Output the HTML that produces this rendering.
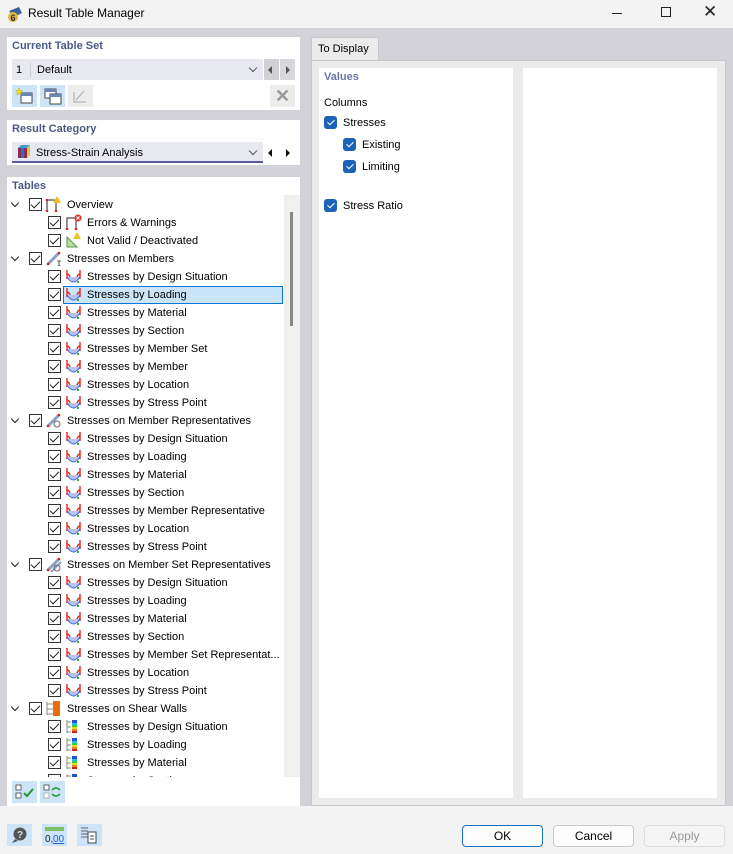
<!DOCTYPE html>
<html><head><meta charset="utf-8"><style>
*{box-sizing:border-box;margin:0;padding:0}
body{width:733px;height:854px;background:#f3f3f3;font-family:"Liberation Sans",sans-serif;font-size:11px;color:#000;position:relative;overflow:hidden}
.a{position:absolute}
.title{left:0;top:0;width:733px;height:28px;background:#f3f3f3}
.body{left:0;top:28px;width:733px;height:778px;background:#d3d2d8}
.panel{background:#fff}
.hdr{color:#4a5a85;font-weight:bold;font-size:11px}
.row{position:absolute;height:18px;line-height:20px;white-space:nowrap}
.cb{position:absolute;top:3px;width:13px;height:13px;border:1px solid #333;background:#fff}
.cb:after{content:"";position:absolute;left:3px;top:0px;width:4px;height:8px;border:solid #222;border-width:0 1.3px 1.3px 0;transform:rotate(45deg)}
.chev{position:absolute;top:5px;width:6px;height:6px;border:solid #222;border-width:0 1.5px 1.5px 0;transform:rotate(45deg)}
.ic{position:absolute;top:1px;width:17px;height:16px}
.bcb{position:absolute;width:13px;height:13px;border-radius:3px;background:#1b63b8}
.bcb:after{content:"";position:absolute;left:4.5px;top:2px;width:3px;height:6px;border:solid #fff;border-width:0 1px 1px 0;transform:rotate(45deg)}
.btn{position:absolute;height:22px;border:1px solid #c9c9c9;border-radius:4px;background:#fdfdfd;text-align:center;line-height:20px;font-size:12px}
.tb{position:absolute;background:#cde3f7;width:25px;height:22px}
</style></head><body>
<div class="a title">
<svg class="a" style="left:6px;top:5px" width="18" height="18"><path d="M3 6 L13 2 L16 8 L8 12Z" fill="#3d5f9a"/><circle cx="7" cy="12" r="5" fill="#e2b73c"/><text x="4.5" y="16" font-size="9" font-weight="bold" fill="#333" font-family="Liberation Sans">6</text></svg>
<div class="a" style="left:28px;top:6px;font-size:12px">Result Table Manager</div>
<div class="a" style="left:612px;top:13px;width:10px;height:1px;background:#222"></div>
<div class="a" style="left:661px;top:7px;width:10px;height:10px;border:1px solid #222"></div>
<div class="a" style="left:703px;top:2px;font-size:17px;color:#222">✕</div>
</div>
<div class="a body"></div>

<div class="a panel" style="left:7px;top:37px;width:293px;height:73px"></div>
<div class="a hdr" style="left:12px;top:40px">Current Table Set</div>
<div class="a" style="left:12px;top:59px;width:251px;height:21px;background:#e8e8f1"></div>
<div class="a" style="left:16px;top:64px;font-size:11px">1</div>
<div class="a" style="left:30px;top:62px;width:1px;height:15px;background:#ccc"></div>
<div class="a" style="left:37px;top:64px">Default</div>
<div class="a chev" style="left:250px;top:65px;border-color:#555;border-width:0 1px 1px 0"></div>
<div class="a" style="left:264px;top:59px;width:15px;height:21px;background:#d2d2d6"></div>
<div class="a" style="left:280px;top:59px;width:15px;height:21px;background:#d8d8dc"></div>
<div class="a" style="left:268px;top:66px;border:4px solid transparent;border-right:4px solid #555;border-left:none"></div>
<div class="a" style="left:286px;top:66px;border:4px solid transparent;border-left:4px solid #555;border-right:none"></div>
<div class="tb" style="left:12px;top:85px"><svg width="25" height="22"><rect x="9" y="8" width="11" height="10" fill="#fff" stroke="#444"/><rect x="9" y="8" width="11" height="3" fill="#6a86b6"/><path d="M7 3l1 2.5 2.5.2-2 1.7.7 2.6-2.2-1.4-2.2 1.4.7-2.6-2-1.7 2.5-.2z" fill="#f4e21a" stroke="#bba400" stroke-width=".5"/></svg></div>
<div class="tb" style="left:40px;top:85px"><svg width="25" height="22"><rect x="5" y="4" width="11" height="9" fill="#fff" stroke="#444"/><rect x="5" y="4" width="11" height="3" fill="#6a86b6"/><rect x="10" y="9" width="11" height="10" fill="#fff" stroke="#444"/><rect x="10" y="9" width="11" height="3" fill="#6a86b6"/></svg></div>
<div class="a" style="left:68px;top:85px;width:25px;height:22px;background:#ececec"><svg width="25" height="22"><path d="M6 7v10h12M8 15l8-9" stroke="#aaa" fill="none"/></svg></div>
<div class="a" style="left:270px;top:85px;width:25px;height:22px;background:#ececec;color:#999;font-size:18px;text-align:center;line-height:22px;font-weight:bold">✕</div>

<div class="a panel" style="left:7px;top:120px;width:293px;height:45px"></div>
<div class="a hdr" style="left:12px;top:123px">Result Category</div>
<div class="a" style="left:12px;top:142px;width:251px;height:21px;background:#e8e8f1;border-bottom:2px solid #5a5aa0"></div>
<svg class="a" style="left:16px;top:144px" width="16" height="16"><rect x="2" y="4" width="9" height="10" fill="#8a2d5a"/><path d="M2 4l3-3h9l-3 3z" fill="#3aa0d8"/><path d="M11 4l3-3v10l-3 3z" fill="#e8c23a"/><rect x="5" y="4" width="3" height="10" fill="#3a6ab0"/></svg>
<div class="a" style="left:36px;top:147px">Stress-Strain Analysis</div>
<div class="a chev" style="left:250px;top:148px;border-color:#555;border-width:0 1px 1px 0"></div>
<div class="a" style="left:264px;top:142px;width:15px;height:21px;background:#fff"></div>
<div class="a" style="left:268px;top:149px;border:4px solid transparent;border-right:4px solid #111;border-left:none"></div>
<div class="a" style="left:286px;top:149px;border:4px solid transparent;border-left:4px solid #111;border-right:none"></div>

<div class="a panel" style="left:7px;top:177px;width:293px;height:629px"></div>
<div class="a hdr" style="left:12px;top:180px">Tables</div>
<div class="a" style="left:284px;top:195px;width:16px;height:582px;background:#f0f0f0"></div>
<div class="a" style="left:290px;top:212px;width:3px;height:114px;background:#888"></div>
<div class="a" style="left:63px;top:286px;width:220px;height:18px;background:#cce4f7;border:1px solid #0078d7"></div>
<div class="a" style="left:7px;top:195px;width:277px;height:582px;overflow:hidden">
<div style="position:relative;left:-7px;top:-195px;width:284px;height:800px">
<svg width="0" height="0" style="position:absolute"><defs>
<g id="st"><path d="M2 2v9M15 2v9" stroke="#e0302a" stroke-width="1.5"/><path d="M2 6q2 0 3 3M15 6q-2 0-3 3" stroke="#e0302a" stroke-width="1.5" fill="none"/><path d="M2 9q6.5 10 13 0" stroke="#4060d0" fill="#b8c4f0" /><rect x="12" y="13" width="2" height="2" fill="#2bb52b"/></g>
<g id="sw"><path d="M2 2v13M2 4h4M2 9h4M2 14h4" stroke="#888"/><rect x="7" y="2" width="5" height="3" fill="#2050e0"/><rect x="7" y="5" width="5" height="2" fill="#20c0e0"/><rect x="7" y="7" width="5" height="2" fill="#30d040"/><rect x="7" y="9" width="5" height="2" fill="#e0e020"/><rect x="7" y="11" width="5" height="2" fill="#f08020"/><rect x="7" y="13" width="5" height="2" fill="#d02020"/></g>
<g id="mem"><path d="M3 14L14 3" stroke="#8aa0c8" stroke-width="3"/><circle cx="3" cy="14" r="1.3" fill="#d02020"/><circle cx="14" cy="3" r="1.3" fill="#d02020"/></g>
</defs></svg>

<div class="row" style="top:195px;left:0"><div class="chev" style="left:12px"></div><div class="cb" style="left:29px"></div><svg class="ic" style="left:45px"><path d="M2 15V4h9v11" stroke="#222" fill="none"/><circle cx="2" cy="15" r="1.3" fill="#d02020"/><circle cx="11" cy="15" r="1.3" fill="#d02020"/><circle cx="2" cy="4" r="1.3" fill="#d02020"/><path d="M12 0l4 7h-8z" fill="#f0c020"/></svg><span style="position:absolute;left:67px">Overview</span></div>
<div class="row" style="top:213px;left:0"><div class="cb" style="left:48px"></div><svg class="ic" style="left:65px"><path d="M2 15V4h9v11" stroke="#222" fill="none"/><circle cx="2" cy="15" r="1.3" fill="#d02020"/><circle cx="11" cy="15" r="1.3" fill="#d02020"/><circle cx="13" cy="4" r="3.5" fill="#e03030"/><path d="M11.5 2.5l3 3M14.5 2.5l-3 3" stroke="#fff"/></svg><span style="position:absolute;left:87px">Errors &amp; Warnings</span></div>
<div class="row" style="top:231px;left:0"><div class="cb" style="left:48px"></div><svg class="ic" style="left:65px"><path d="M2 15V5l10 10z" fill="#b8e0a0" stroke="#5a9a4a"/><path d="M12 0l4 7h-8z" fill="#f0c020"/></svg><span style="position:absolute;left:87px">Not Valid / Deactivated</span></div>

<div class="row" style="top:249px;left:0"><div class="chev" style="left:12px"></div><div class="cb" style="left:29px"></div><svg class="ic" style="left:45px"><use href="#mem"/><path d="M12 11h4M14 11v5M12 16h4" stroke="#333" stroke-width=".8"/></svg><span style="position:absolute;left:67px">Stresses on Members</span></div>
<div class="row" style="top:267px"><div class="cb" style="left:48px"></div><svg class="ic" style="left:65px"><use href="#st"/></svg><span style="position:absolute;left:87px">Stresses by Design Situation</span></div>
<div class="row" style="top:285px"><div class="cb" style="left:48px"></div><svg class="ic" style="left:65px"><use href="#st"/></svg><span style="position:absolute;left:87px">Stresses by Loading</span></div>
<div class="row" style="top:303px"><div class="cb" style="left:48px"></div><svg class="ic" style="left:65px"><use href="#st"/></svg><span style="position:absolute;left:87px">Stresses by Material</span></div>
<div class="row" style="top:321px"><div class="cb" style="left:48px"></div><svg class="ic" style="left:65px"><use href="#st"/></svg><span style="position:absolute;left:87px">Stresses by Section</span></div>
<div class="row" style="top:339px"><div class="cb" style="left:48px"></div><svg class="ic" style="left:65px"><use href="#st"/></svg><span style="position:absolute;left:87px">Stresses by Member Set</span></div>
<div class="row" style="top:357px"><div class="cb" style="left:48px"></div><svg class="ic" style="left:65px"><use href="#st"/></svg><span style="position:absolute;left:87px">Stresses by Member</span></div>
<div class="row" style="top:375px"><div class="cb" style="left:48px"></div><svg class="ic" style="left:65px"><use href="#st"/></svg><span style="position:absolute;left:87px">Stresses by Location</span></div>
<div class="row" style="top:393px"><div class="cb" style="left:48px"></div><svg class="ic" style="left:65px"><use href="#st"/></svg><span style="position:absolute;left:87px">Stresses by Stress Point</span></div>

<div class="row" style="top:411px;left:0"><div class="chev" style="left:12px"></div><div class="cb" style="left:29px"></div><svg class="ic" style="left:45px"><use href="#mem"/><circle cx="12" cy="12" r="3" fill="none" stroke="#666"/></svg><span style="position:absolute;left:67px">Stresses on Member Representatives</span></div>
<div class="row" style="top:429px"><div class="cb" style="left:48px"></div><svg class="ic" style="left:65px"><use href="#st"/></svg><span style="position:absolute;left:87px">Stresses by Design Situation</span></div>
<div class="row" style="top:447px"><div class="cb" style="left:48px"></div><svg class="ic" style="left:65px"><use href="#st"/></svg><span style="position:absolute;left:87px">Stresses by Loading</span></div>
<div class="row" style="top:465px"><div class="cb" style="left:48px"></div><svg class="ic" style="left:65px"><use href="#st"/></svg><span style="position:absolute;left:87px">Stresses by Material</span></div>
<div class="row" style="top:483px"><div class="cb" style="left:48px"></div><svg class="ic" style="left:65px"><use href="#st"/></svg><span style="position:absolute;left:87px">Stresses by Section</span></div>
<div class="row" style="top:501px"><div class="cb" style="left:48px"></div><svg class="ic" style="left:65px"><use href="#st"/></svg><span style="position:absolute;left:87px">Stresses by Member Representative</span></div>
<div class="row" style="top:519px"><div class="cb" style="left:48px"></div><svg class="ic" style="left:65px"><use href="#st"/></svg><span style="position:absolute;left:87px">Stresses by Location</span></div>
<div class="row" style="top:537px"><div class="cb" style="left:48px"></div><svg class="ic" style="left:65px"><use href="#st"/></svg><span style="position:absolute;left:87px">Stresses by Stress Point</span></div>

<div class="row" style="top:555px;left:0"><div class="chev" style="left:12px"></div><div class="cb" style="left:29px"></div><svg class="ic" style="left:45px"><use href="#mem"/><path d="M6 16L16 6" stroke="#8aa0c8" stroke-width="2"/><circle cx="12" cy="12" r="3" fill="none" stroke="#666"/></svg><span style="position:absolute;left:67px">Stresses on Member Set Representatives</span></div>
<div class="row" style="top:573px"><div class="cb" style="left:48px"></div><svg class="ic" style="left:65px"><use href="#st"/></svg><span style="position:absolute;left:87px">Stresses by Design Situation</span></div>
<div class="row" style="top:591px"><div class="cb" style="left:48px"></div><svg class="ic" style="left:65px"><use href="#st"/></svg><span style="position:absolute;left:87px">Stresses by Loading</span></div>
<div class="row" style="top:609px"><div class="cb" style="left:48px"></div><svg class="ic" style="left:65px"><use href="#st"/></svg><span style="position:absolute;left:87px">Stresses by Material</span></div>
<div class="row" style="top:627px"><div class="cb" style="left:48px"></div><svg class="ic" style="left:65px"><use href="#st"/></svg><span style="position:absolute;left:87px">Stresses by Section</span></div>
<div class="row" style="top:645px"><div class="cb" style="left:48px"></div><svg class="ic" style="left:65px"><use href="#st"/></svg><span style="position:absolute;left:87px">Stresses by Member Set Representat...</span></div>
<div class="row" style="top:663px"><div class="cb" style="left:48px"></div><svg class="ic" style="left:65px"><use href="#st"/></svg><span style="position:absolute;left:87px">Stresses by Location</span></div>
<div class="row" style="top:681px"><div class="cb" style="left:48px"></div><svg class="ic" style="left:65px"><use href="#st"/></svg><span style="position:absolute;left:87px">Stresses by Stress Point</span></div>

<div class="row" style="top:699px;left:0"><div class="chev" style="left:12px"></div><div class="cb" style="left:29px"></div><svg class="ic" style="left:45px"><path d="M2 2v13M2 4h6M2 9h6M2 14h6" stroke="#888"/><rect x="8" y="1" width="7" height="15" fill="#f06a10"/></svg><span style="position:absolute;left:67px">Stresses on Shear Walls</span></div>
<div class="row" style="top:717px"><div class="cb" style="left:48px"></div><svg class="ic" style="left:65px"><use href="#sw"/></svg><span style="position:absolute;left:87px">Stresses by Design Situation</span></div>
<div class="row" style="top:735px"><div class="cb" style="left:48px"></div><svg class="ic" style="left:65px"><use href="#sw"/></svg><span style="position:absolute;left:87px">Stresses by Loading</span></div>
<div class="row" style="top:753px"><div class="cb" style="left:48px"></div><svg class="ic" style="left:65px"><use href="#sw"/></svg><span style="position:absolute;left:87px">Stresses by Material</span></div>
<div class="row" style="top:771px"><div class="cb" style="left:48px"></div><svg class="ic" style="left:65px"><use href="#sw"/></svg><span style="position:absolute;left:87px">Stresses by Section</span></div>
</div></div>
<div class="tb" style="left:12px;top:781px"><svg width="25" height="22"><rect x="4" y="4" width="5" height="5" fill="#fff" stroke="#444" stroke-width=".8"/><rect x="4" y="12" width="5" height="5" fill="#fff" stroke="#444" stroke-width=".8"/><path d="M12 12l3 3 6-7" stroke="#1a9a2a" stroke-width="2" fill="none"/></svg></div>
<div class="tb" style="left:40px;top:781px"><svg width="25" height="22"><rect x="4" y="4" width="5" height="5" fill="#fff" stroke="#444" stroke-width=".8"/><rect x="4" y="12" width="5" height="5" fill="#fff" stroke="#aaa" stroke-width=".8"/><path d="M12 9q4-4 8 0M20 13q-4 4-8 0" stroke="#1a9a2a" stroke-width="1.5" fill="none"/></svg></div>

<div class="a" style="left:311px;top:37px;width:68px;height:24px;background:#ebebeb;border:1px solid #c8c8cc;border-bottom:none"></div>
<div class="a" style="left:318px;top:43px;font-size:11px">To Display</div>
<div class="a" style="left:311px;top:60px;width:415px;height:746px;background:#ebebeb;border:1px solid #c8c8cc"></div>
<div class="a" style="left:319px;top:68px;width:194px;height:730px;background:#fff"></div>
<div class="a" style="left:523px;top:68px;width:194px;height:730px;background:#fff"></div>
<div class="a hdr" style="left:324px;top:71px;color:#6a7aa5">Values</div>
<div class="a" style="left:324px;top:97px">Columns</div>
<div class="bcb" style="left:324px;top:116px"></div><div class="a" style="left:343px;top:117px">Stresses</div>
<div class="bcb" style="left:343px;top:138px"></div><div class="a" style="left:362px;top:139px">Existing</div>
<div class="bcb" style="left:343px;top:160px"></div><div class="a" style="left:362px;top:161px">Limiting</div>
<div class="bcb" style="left:324px;top:199px"></div><div class="a" style="left:343px;top:200px">Stress Ratio</div>

<div class="tb" style="left:7px;top:824px"><svg width="25" height="22"><circle cx="13" cy="10" r="6.5" fill="#555"/><path d="M8 15l-3 4 6-2z" fill="#555"/><text x="10" y="14" font-size="10" font-weight="bold" fill="#cde3f7" font-family="Liberation Sans">?</text></svg></div>
<div class="tb" style="left:42px;top:824px"><svg width="25" height="22"><rect x="3" y="3" width="19" height="4" fill="#7cc060"/><text x="3" y="18" font-size="10" fill="#222" font-family="Liberation Sans">0,</text><text x="11" y="18" font-size="10" fill="#2060d0" font-family="Liberation Sans" text-decoration="underline">00</text></svg></div>
<div class="tb" style="left:77px;top:824px"><svg width="25" height="22"><path d="M4 4h7M4 7h7M4 10h7M4 13h7" stroke="#666"/><rect x="11" y="8" width="8" height="11" fill="#fff" stroke="#444"/><path d="M13 12h4M13 15h4" stroke="#444"/></svg></div>
<div class="btn" style="left:462px;top:825px;width:81px;border-color:#1a6ec0">OK</div>
<div class="btn" style="left:553px;top:825px;width:81px">Cancel</div>
<div class="btn" style="left:644px;top:825px;width:81px;color:#9a9a9a;background:#f5f5f5;border-color:#ddd">Apply</div>
</body></html>
